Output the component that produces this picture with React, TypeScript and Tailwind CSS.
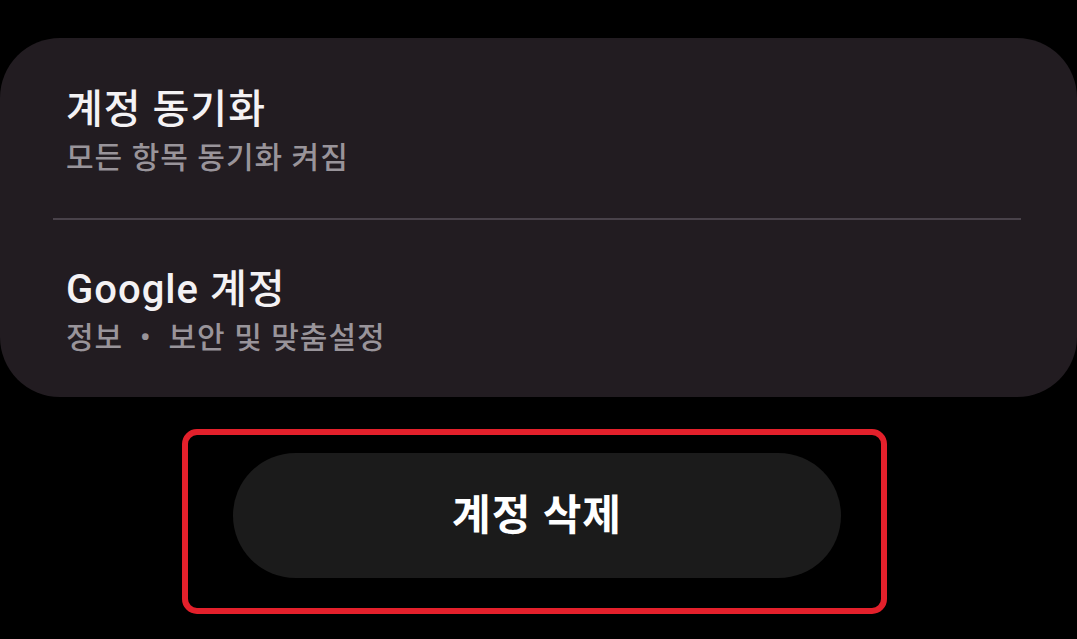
export default function App() {
    const rows = [
        { title: "계정 동기화", subtitle: "모든 항목 동기화 켜짐" },
        { title: "Google 계정", subtitle: "정보  •  보안 및 맞춤설정" },
    ];

    return (
        <div className="h-[639px] w-[1077px] overflow-hidden bg-black pt-[38px] font-['Roboto','Noto_Sans_CJK_KR',sans-serif]">
            {/* settings card */}
            <div className="w-full rounded-[60px] bg-[#221c21]">
                <div className="pb-[42px] pl-[66px] pt-[49px]">
                    <div className="text-[40px] font-medium leading-[46px] tracking-[1px] text-[#f4f2f4]">{rows[0].title}</div>
                    <div className="mt-[7px] text-[30px] font-medium leading-[36px] tracking-[1px] text-[#99949a]">{rows[0].subtitle}</div>
                </div>
                <div className="ml-[53px] mr-[56px] h-[2px] bg-[#49424a]" />
                <div className="pb-[41px] pl-[66px] pt-[47px]">
                    <div className="text-[40px] font-medium leading-[46px] tracking-[1px] text-[#f4f2f4]">{rows[1].title}</div>
                    <div className="mt-[7px] whitespace-pre text-[30px] font-medium leading-[36px] tracking-[1px] text-[#99949a]">{rows[1].subtitle}</div>
                </div>
            </div>

            {/* highlighted delete button */}
            <div className="ml-[182px] mt-[32px] w-[705px] rounded-[15px] border-[6px] border-[#e3202b] pb-[30px] pl-[45px] pt-[18px]">
                <button className="flex h-[125px] w-[608px] items-center justify-center rounded-full bg-[#1b1b1b] text-[42px] font-bold tracking-[1px] text-white">
                    계정 삭제
                </button>
            </div>
        </div>
    );
}
